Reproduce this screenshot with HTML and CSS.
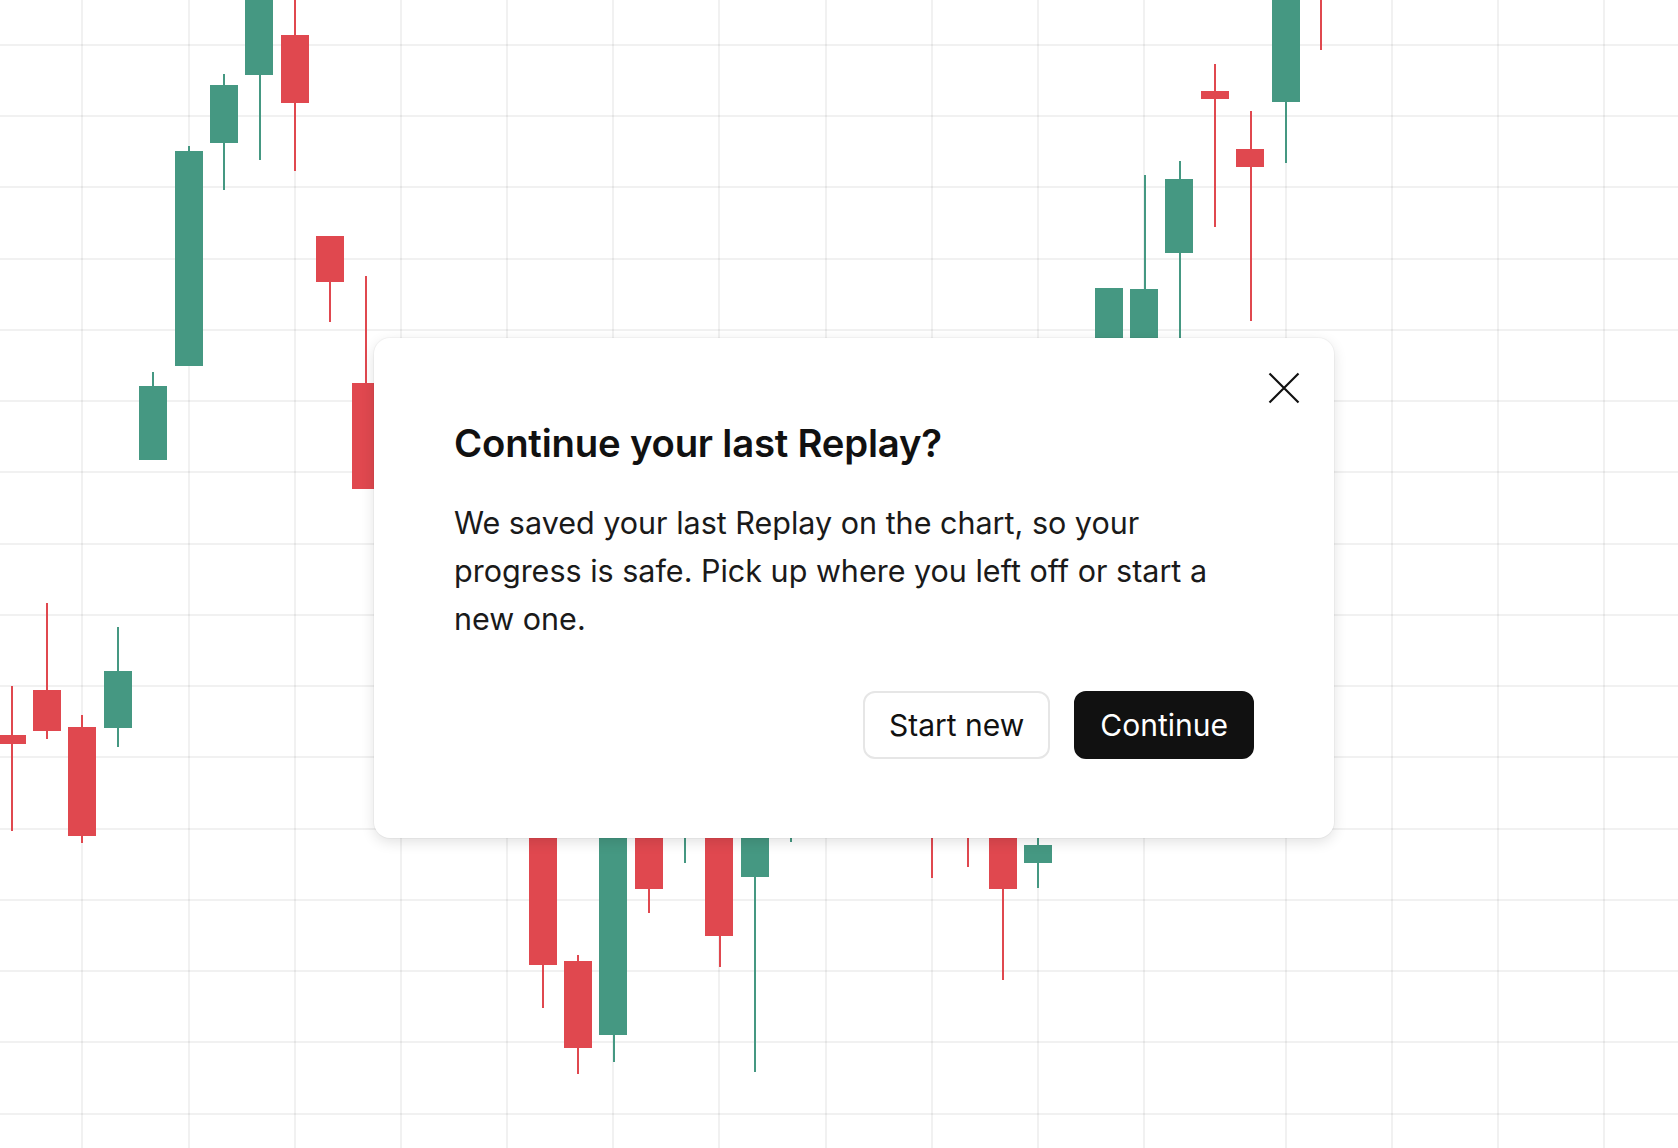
FILE: index.html
```
<!DOCTYPE html>
<html lang="en">
<head>
    <meta charset="UTF-8">
    <meta name="viewport" content="width=device-width, initial-scale=1.0">
    <title>Replay</title>
    <link rel="stylesheet" href="styles.css">
</head>
<body>
    <svg class="chart" width="1678" height="1148" viewBox="0 0 1678 1148">
        <g class="grid">
            <line x1="0" y1="45" x2="1678" y2="45"/>
            <line x1="0" y1="116" x2="1678" y2="116"/>
            <line x1="0" y1="187" x2="1678" y2="187"/>
            <line x1="0" y1="259" x2="1678" y2="259"/>
            <line x1="0" y1="330" x2="1678" y2="330"/>
            <line x1="0" y1="401" x2="1678" y2="401"/>
            <line x1="0" y1="472" x2="1678" y2="472"/>
            <line x1="0" y1="544" x2="1678" y2="544"/>
            <line x1="0" y1="615" x2="1678" y2="615"/>
            <line x1="0" y1="686" x2="1678" y2="686"/>
            <line x1="0" y1="757" x2="1678" y2="757"/>
            <line x1="0" y1="829" x2="1678" y2="829"/>
            <line x1="0" y1="900" x2="1678" y2="900"/>
            <line x1="0" y1="971" x2="1678" y2="971"/>
            <line x1="0" y1="1042" x2="1678" y2="1042"/>
            <line x1="0" y1="1114" x2="1678" y2="1114"/>

            <line x1="82" y1="0" x2="82" y2="1148"/>
            <line x1="189" y1="0" x2="189" y2="1148"/>
            <line x1="295" y1="0" x2="295" y2="1148"/>
            <line x1="401" y1="0" x2="401" y2="1148"/>
            <line x1="507" y1="0" x2="507" y2="1148"/>
            <line x1="613" y1="0" x2="613" y2="1148"/>
            <line x1="719" y1="0" x2="719" y2="1148"/>
            <line x1="826" y1="0" x2="826" y2="1148"/>
            <line x1="932" y1="0" x2="932" y2="1148"/>
            <line x1="1038" y1="0" x2="1038" y2="1148"/>
            <line x1="1144" y1="0" x2="1144" y2="1148"/>
            <line x1="1286" y1="0" x2="1286" y2="1148"/>
            <line x1="1392" y1="0" x2="1392" y2="1148"/>
            <line x1="1498" y1="0" x2="1498" y2="1148"/>
            <line x1="1604" y1="0" x2="1604" y2="1148"/>
        </g>

        <!-- falling candles -->
        <g class="down">
            <rect x="11" y="686" width="2" height="145"/>
            <rect x="-2" y="735" width="28" height="9"/>
            <rect x="46" y="603" width="2" height="136"/>
            <rect x="33" y="690" width="28" height="41"/>
            <rect x="81" y="715" width="2" height="128"/>
            <rect x="68" y="727" width="28" height="109"/>
            <rect x="294" y="-10" width="2" height="181"/>
            <rect x="281" y="35" width="28" height="68"/>
            <rect x="329" y="236" width="2" height="86"/>
            <rect x="316" y="236" width="28" height="46"/>
            <rect x="365" y="276" width="2" height="213"/>
            <rect x="352" y="383" width="28" height="106"/>

            <rect x="542" y="800" width="2" height="208"/>
            <rect x="529" y="800" width="28" height="165"/>
            <rect x="577" y="955" width="2" height="119"/>
            <rect x="564" y="961" width="28" height="87"/>
            <rect x="648" y="800" width="2" height="113"/>
            <rect x="635" y="800" width="28" height="89"/>
            <rect x="719" y="800" width="2" height="167"/>
            <rect x="705" y="800" width="28" height="136"/>
            <rect x="931" y="800" width="2" height="78"/>
            <rect x="967" y="800" width="2" height="67"/>
            <rect x="1002" y="800" width="2" height="180"/>
            <rect x="989" y="800" width="28" height="89"/>

            <rect x="1214" y="64" width="2" height="163"/>
            <rect x="1201" y="91" width="28" height="8"/>
            <rect x="1250" y="111" width="2" height="210"/>
            <rect x="1236" y="149" width="28" height="18"/>
            <rect x="1320" y="-10" width="2" height="60"/>
        </g>

        <!-- rising candles -->
        <g class="up">
            <rect x="117" y="627" width="2" height="120"/>
            <rect x="104" y="671" width="28" height="57"/>
            <rect x="152" y="372" width="2" height="20"/>
            <rect x="139" y="386" width="28" height="74"/>
            <rect x="188" y="146" width="2" height="10"/>
            <rect x="175" y="151" width="28" height="215"/>
            <rect x="223" y="74" width="2" height="116"/>
            <rect x="210" y="85" width="28" height="58"/>
            <rect x="259" y="-10" width="2" height="170"/>
            <rect x="245" y="-10" width="28" height="85"/>

            <rect x="613" y="800" width="2" height="262"/>
            <rect x="599" y="800" width="28" height="235"/>
            <rect x="684" y="800" width="2" height="63"/>
            <rect x="754" y="800" width="2" height="272"/>
            <rect x="741" y="800" width="28" height="77"/>
            <rect x="790" y="800" width="2" height="42"/>
            <rect x="1037" y="800" width="2" height="88"/>
            <rect x="1024" y="845" width="28" height="18"/>

            <rect x="1095" y="288" width="28" height="112"/>
            <rect x="1144" y="175" width="2" height="225"/>
            <rect x="1130" y="289" width="28" height="111"/>
            <rect x="1179" y="161" width="2" height="239"/>
            <rect x="1165" y="179" width="28" height="74"/>
            <rect x="1285" y="-10" width="2" height="173"/>
            <rect x="1272" y="-10" width="28" height="112"/>
        </g>
    </svg>

    <div class="overlay">
        <div class="dialog">
            <button class="close" type="button" aria-label="Close">
                <svg width="32" height="32" viewBox="0 0 32 32">
                    <path d="M1.5 1.5 L30.5 30.5 M30.5 1.5 L1.5 30.5"/>
                </svg>
            </button>
            <h2 class="dialog-title">Continue your last Replay?</h2>
            <p class="dialog-text">We saved your last Replay on the chart, so your progress is safe. Pick up where you left off or start a new one.</p>
            <div class="dialog-actions">
                <button class="btn btn-secondary" type="button">Start new</button>
                <button class="btn btn-primary" type="button">Continue</button>
            </div>
        </div>
    </div>
</body>
</html>
```

FILE: styles.css
```
body {
    margin: 0;
    background: #ffffff;
    font-family: Inter, 'Noto Sans', sans-serif;
    color: #111111;
    overflow: hidden;
}

.chart {
    position: absolute;
    top: 0;
    left: 0;
    display: block;
}

.grid line {
    stroke: rgba(0, 0, 0, 0.055);
    stroke-width: 2;
}

.up rect {
    fill: #459882;
}

.down rect {
    fill: #e0484f;
}

.overlay {
    position: absolute;
    inset: 0;
    display: flex;
    align-items: flex-start;
    padding: 338px 0 0 374px;
}

.dialog {
    position: relative;
    box-sizing: border-box;
    width: 960px;
    height: 500px;
    padding: 80px 80px;
    background: #ffffff;
    border-radius: 16px;
    box-shadow: 0 4px 14px rgba(0, 0, 0, 0.12), 0 0 0 1px rgba(0, 0, 0, 0.03);
}

.close {
    position: absolute;
    top: 34px;
    right: 34px;
    width: 32px;
    height: 32px;
    padding: 0;
    border: none;
    background: none;
    cursor: pointer;
}

.close svg {
    display: block;
}

.close path {
    stroke: #111111;
    stroke-width: 2.2;
    fill: none;
}

.dialog-title {
    margin: 0;
    font-size: 38.3px;
    line-height: 50px;
    font-weight: 600;
    letter-spacing: -0.2px;
    color: #111111;
}

.dialog-text {
    max-width: 780px;
    margin: 31px 0 0;
    font-size: 30.5px;
    line-height: 48px;
    color: #1a1a1a;
}

.dialog-actions {
    display: flex;
    justify-content: flex-end;
    gap: 24px;
    margin-top: 48px;
}

.btn {
    box-sizing: border-box;
    height: 68px;
    padding: 0 24px;
    border-radius: 12px;
    font-family: inherit;
    font-size: 30px;
    cursor: pointer;
}

.btn-secondary {
    background: #ffffff;
    color: #111111;
    border: 2px solid #e6e6e6;
}

.btn-primary {
    background: #111111;
    color: #ffffff;
    border: 2px solid #111111;
}
```
